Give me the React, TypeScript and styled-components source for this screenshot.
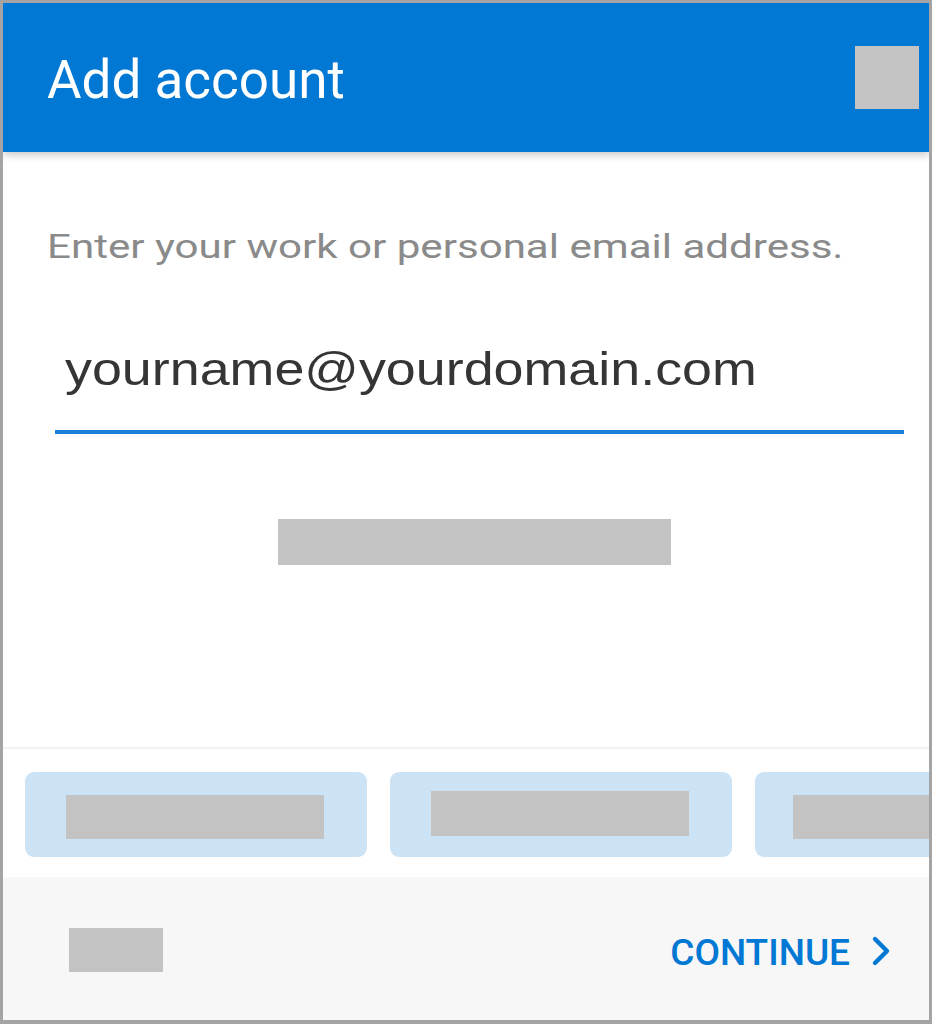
import styled, { createGlobalStyle } from "styled-components";

const Global = createGlobalStyle`
  html, body {
    margin: 0;
    padding: 0;
    background: #ffffff;
  }
  * {
    box-sizing: border-box;
  }
`;

export default function App() {
  return (
    <>
      <Global />
      <Frame>
        <Header>
          <Title>Add account</Title>
          <Blank $w={64} $h={63} />
        </Header>

        <Body>
          <Hint>Enter your work or personal email address.</Hint>
          <EmailField>
            <EmailText>yourname@yourdomain.com</EmailText>
          </EmailField>
          <Centered>
            <Blank $w={393} $h={46} />
          </Centered>
        </Body>

        <ChipRow>
          <Chip $inset={41}>
            <Blank $w={258} $h={44} $top={23} />
          </Chip>
          <Chip $inset={41}>
            <Blank $w={258} $h={45} $top={19} />
          </Chip>
          <Chip $inset={38}>
            <Blank $w={258} $h={44} $top={23} />
          </Chip>
        </ChipRow>

        <Footer>
          <Blank $w={94} $h={44} />
          <ContinueButton>
            CONTINUE
            <svg width="22" height="32" viewBox="0 0 22 32" fill="none">
              <path
                d="M5 4 L17 16 L5 28"
                stroke="#0078d4"
                strokeWidth="4.4"
                strokeLinecap="round"
                strokeLinejoin="round"
              />
            </svg>
          </ContinueButton>
        </Footer>
      </Frame>
    </>
  );
}

const Frame = styled.div`
  width: 932px;
  height: 1024px;
  border: 3px solid #a4a4a4;
  border-bottom-width: 4px;
  display: flex;
  flex-direction: column;
  overflow: hidden;
  background: #fff;
  font-family: Roboto, "Noto Sans", sans-serif;
`;

const Header = styled.div`
  height: 149px;
  flex-shrink: 0;
  background: #0078d4;
  display: flex;
  align-items: center;
  justify-content: space-between;
  padding: 0 10px 0 44px;
  box-shadow: 0 3px 8px rgba(0, 0, 0, 0.22);
  position: relative;
  z-index: 1;
`;

const Title = styled.h1`
  margin: 4px 0 0 0;
  color: #ffffff;
  font-size: 53px;
  font-weight: 400;
  letter-spacing: 0;
`;

const Blank = styled.div<{ $w: number; $h: number; $top?: number }>`
  width: ${(p) => p.$w}px;
  height: ${(p) => p.$h}px;
  margin-top: ${(p) => (p.$top !== undefined ? `${p.$top}px` : "0")};
  background: #c3c3c3;
  flex-shrink: 0;
`;

const Body = styled.div`
  flex: 1;
  padding: 71px 25px 0 44px;
  border-bottom: 2px solid #f2f2f2;
`;

/* the source screenshot is stretched sideways, so the text is widened to match */
const Hint = styled.p`
  margin: 0;
  color: #8a8a8a;
  font-size: 33px;
  font-weight: 400;
  line-height: 48px;
  white-space: nowrap;
  transform: scaleX(1.275);
  transform-origin: left center;
`;

const EmailField = styled.div`
  margin: 70px 0 0 8px;
  padding: 0 0 33px 10px;
  border-bottom: 4px solid #1a7fd8;
`;

const EmailText = styled.div`
  color: #353535;
  font-family: "Liberation Sans", Arial, sans-serif;
  font-size: 46px;
  line-height: 56px;
  white-space: nowrap;
  transform: scaleX(1.17);
  transform-origin: left center;
`;

const Centered = styled.div`
  display: flex;
  justify-content: center;
  margin: 85px 0 0 0;
  padding-right: 2px;
`;

const ChipRow = styled.div`
  height: 128px;
  flex-shrink: 0;
  display: flex;
  gap: 23px;
  padding: 23px 0 0 22px;
`;

const Chip = styled.div<{ $inset: number }>`
  width: 342px;
  height: 85px;
  flex-shrink: 0;
  background: #cce3f5;
  border-radius: 9px;
  display: flex;
  justify-content: flex-start;
  align-items: flex-start;
  padding-left: ${(p) => p.$inset}px;
`;

const Footer = styled.div`
  height: 143px;
  flex-shrink: 0;
  background: #f7f7f7;
  display: flex;
  align-items: center;
  justify-content: space-between;
  padding: 2px 37px 0 66px;
`;

const ContinueButton = styled.button`
  display: flex;
  align-items: center;
  gap: 20px;
  border: none;
  background: none;
  padding: 6px 0 0 0;
  color: #0078d4;
  font-family: Roboto, "Noto Sans", sans-serif;
  font-size: 37px;
  font-weight: 500;
  letter-spacing: 0;
  cursor: pointer;

  svg {
    margin-top: -4px;
  }
`;
